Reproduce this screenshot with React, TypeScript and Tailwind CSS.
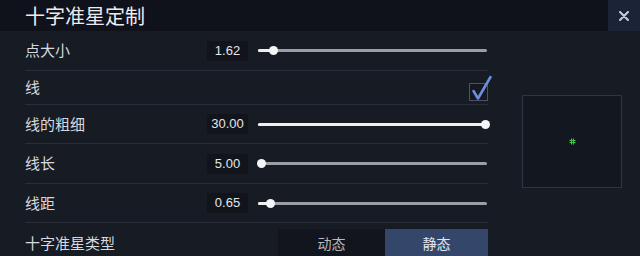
import React from "react";

const font = { fontFamily: '"Noto Sans CJK SC", "Noto Sans", sans-serif' };

function Slider({ pos }: { pos: number }) {
  return (
    <div className="relative w-[229px] h-[10px] flex items-center">
      <div className="w-full h-[3px] bg-[#9a9ea6] rounded-full" />
      <div className="absolute left-0 top-[3.5px] h-[3px] bg-[#eeeff1] rounded-full" style={{ width: pos }} />
      <div
        className="absolute top-[0.5px] w-[9px] h-[9px] rounded-full bg-[#f4f5f7]"
        style={{ left: pos - 4.5 }}
      />
    </div>
  );
}

function SliderRow({ label, value, pos, h }: { label: string; value: string; pos: number; h: string }) {
  return (
    <div className={`flex items-center border-b border-[#2a2e38] ${h}`}>
      <div className="w-[182px] text-[15px] text-[#d6d9df]">{label}</div>
      <div className="w-[41px] h-[20px] bg-[#11141b] flex items-center justify-center text-[13px] text-[#e4e6ea]" style={{ fontFamily: '"Liberation Sans", "Noto Sans", sans-serif' }}>
        {value}
      </div>
      <div className="ml-[10px]">
        <Slider pos={pos} />
      </div>
    </div>
  );
}

export default function App() {
  return (
    <div className="w-[640px] h-[256px] bg-[#171b24] overflow-hidden flex flex-col" style={font}>
      <div className="h-[31px] bg-[#0f121a] flex items-center justify-between shrink-0">
        <div className="pl-[25px] text-[20px] text-[#ececee] leading-none">十字准星定制</div>
        <div className="w-[32px] h-[31px] bg-[#1a2436] flex items-center justify-center">
          <svg width="10" height="10" viewBox="0 0 10 10">
            <path d="M1 1L9 9M9 1L1 9" stroke="#c9cfda" strokeWidth="2" strokeLinecap="round" />
          </svg>
        </div>
      </div>
      <div className="flex flex-1">
        <div className="pl-[25px] w-[488px] flex flex-col">
          <SliderRow label="点大小" value="1.62" pos={15} h="h-[40px]" />
          <div className="flex items-center justify-between border-b border-[#2a2e38] h-[34px]">
            <div className="text-[15px] text-[#d6d9df]">线</div>
            <div className="relative w-[19px] h-[18px] border border-[#4c5363] bg-[#141820] mt-[8px]">
              <svg className="absolute left-[1px] -top-[9px]" width="22" height="26" viewBox="0 0 22 26">
                <path d="M2.5 16L7 23.5L19.5 2" stroke="#6b8fdc" strokeWidth="2.6" fill="none" strokeLinecap="round" strokeLinejoin="round" />
              </svg>
            </div>
          </div>
          <SliderRow label="线的粗细" value="30.00" pos={227} h="h-[39px]" />
          <SliderRow label="线长" value="5.00" pos={3} h="h-[40px]" />
          <SliderRow label="线距" value="0.65" pos={12} h="h-[39px]" />
          <div className="flex items-start flex-1">
            <div className="w-[253px] text-[15px] text-[#d6d9df] pt-[9px]">十字准星类型</div>
            <div className="flex mt-[6px] h-[28px]">
              <div className="w-[107px] bg-[#12151d] flex items-center justify-center text-[14px] text-[#b5b9c1]">动态</div>
              <div className="w-[103px] bg-[#34476a] flex items-center justify-center text-[14px] text-[#e2e6ee]">静态</div>
            </div>
          </div>
        </div>
        <div className="flex-1 pl-[34px] pt-[64px]">
          <div className="w-[100px] h-[93px] border border-[#30343e] bg-[#131720] flex items-center justify-center">
            <svg width="7" height="7" viewBox="0 0 7 7">
              <path d="M2.5 0.5V6.5M4.5 0.5V6.5M0.5 2.5H6.5M0.5 4.5H6.5" stroke="#45c24a" strokeWidth="1.1" />
            </svg>
          </div>
        </div>
      </div>
    </div>
  );
}
